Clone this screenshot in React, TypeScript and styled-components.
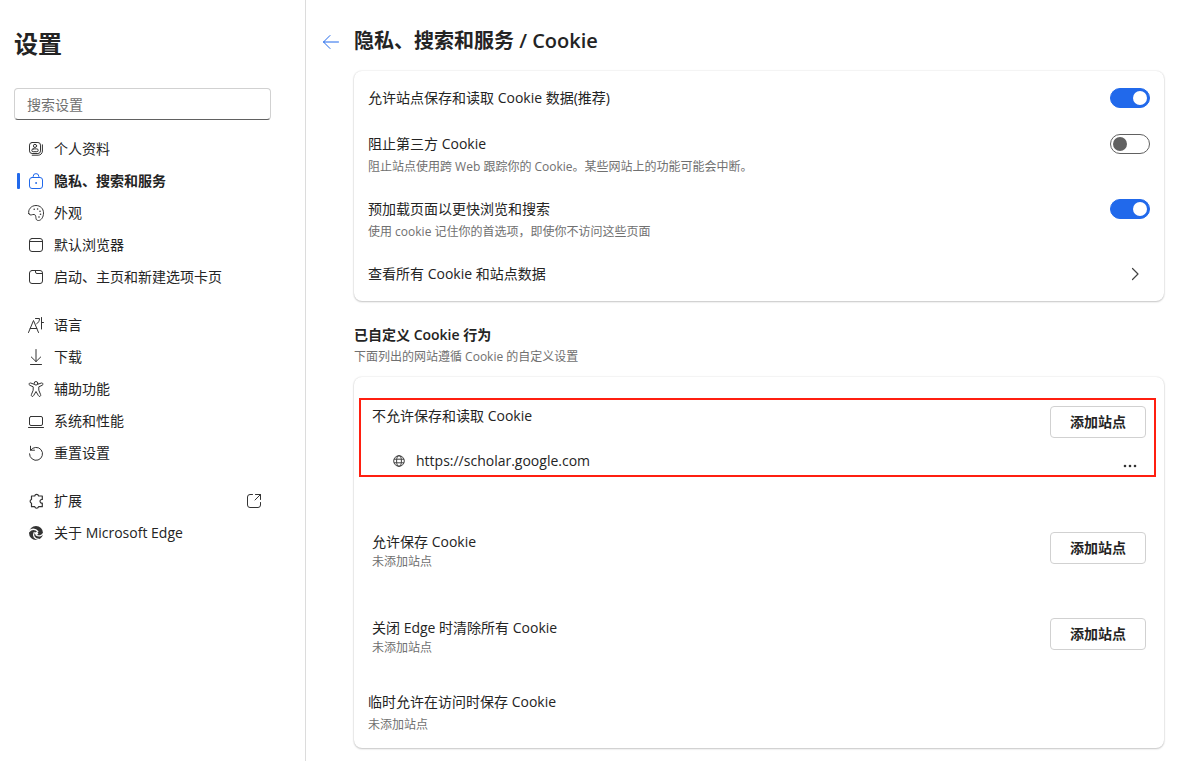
import React from "react";
import styled, { createGlobalStyle, css } from "styled-components";

const GlobalStyle = createGlobalStyle`
  *, *::before, *::after { box-sizing: border-box; }
  body {
    margin: 0;
    background: #fff;
    color: #242424;
    font: 14px/20px "Open Sans", "Noto Sans CJK SC", sans-serif;
  }
  h1, h2, h3, p, ul { margin: 0; padding: 0; }
  ul { list-style: none; }
  button, input { font: inherit; color: inherit; }
`;

const Page = styled.div`
  display: grid;
  grid-template-columns: 306px minmax(0, 1fr);
  min-height: 100vh;
`;

/* Sidebar */

const Sidebar = styled.aside`
  padding: 28px 34px 20px 14px;
  border-right: 1px solid #dcdcdc;
`;

const SidebarTitle = styled.h1`
  font-size: 24px;
  line-height: 32px;
  font-weight: 700;
`;

const SearchInput = styled.input`
  display: block;
  width: 100%;
  height: 32px;
  margin: 28px 0 13px;
  padding: 0 12px;
  border: 1px solid #d1d1d1;
  border-bottom-color: #616161;
  border-radius: 4px;
  background: #fff;
  outline: none;

  &::placeholder { color: #707070; opacity: 1; }
`;

const NavGroup = styled.ul`
  & + & { margin-top: 16px; }
`;

const NavLink = styled.a<{ $active?: boolean }>`
  display: flex;
  align-items: center;
  gap: 10px;
  height: 32px;
  padding: 0 9px 0 14px;
  color: inherit;
  text-decoration: none;

  svg { color: #333; }

  ${({ $active }) =>
    $active &&
    css`
      padding-left: 3px;
      gap: 8px;
      font-weight: 700;

      &::before {
        content: "";
        width: 3px;
        height: 16px;
        border-radius: 1px;
        background: #2169eb;
      }

      svg { color: #2169eb; }
      span { margin-left: 2px; }
    `}
`;

const NavText = styled.span`
  flex: 1;
`;

const Icon = styled.svg`
  display: block;
  flex: none;
  width: 16px;
  height: 16px;
  fill: none;
  stroke: currentColor;
  stroke-linecap: round;
  stroke-linejoin: round;
`;

/* Main column */

const Main = styled.main`
  display: flex;
  flex-direction: column;
  padding: 29px 17px 12px 48px;
`;

const Header = styled.header`
  display: flex;
  align-items: center;
  gap: 14px;
  margin-left: -32px;
`;

const BackButton = styled.button`
  display: grid;
  place-items: center;
  padding: 2px 0 0;
  border: 0;
  background: none;
  color: #2169eb;
  cursor: pointer;
`;

const PageTitle = styled.h2`
  font-size: 20px;
  line-height: 24px;
  font-weight: 600;
`;

const Card = styled.section`
  display: flex;
  flex-direction: column;
  border-radius: 8px;
  background: #fff;
  box-shadow: 0 1px 2px rgba(0, 0, 0, 0.2), 0 0 2px rgba(0, 0, 0, 0.14);
`;

const SettingsCard = styled(Card)`
  gap: 24px;
  margin-top: 18px;
  padding: 17px 14px;
`;

const SitesCard = styled(Card)`
  gap: 36px;
  padding: 21px 8px 15px 5px;
`;

const Row = styled.div`
  display: flex;
  justify-content: space-between;
  align-items: flex-start;
  min-height: 22px;
`;

const RowText = styled.div<{ $tight?: boolean }>`
  display: flex;
  flex-direction: column;
  gap: ${({ $tight }) => ($tight ? 1 : 4)}px;
`;

const Description = styled.p`
  color: #707070;
  font-size: 12px;
  line-height: 17px;
`;

const Switch = styled.input`
  appearance: none;
  display: flex;
  align-items: center;
  width: 40px;
  height: 20px;
  margin: 0;
  padding: 0 2px;
  border: 1px solid #616161;
  border-radius: 10px;
  background: #fff;
  cursor: pointer;

  &::before {
    content: "";
    width: 14px;
    height: 14px;
    border-radius: 50%;
    background: #616161;
  }

  &:checked {
    justify-content: flex-end;
    border-color: #2169eb;
    background: #2169eb;
  }

  &:checked::before { background: #fff; }
`;

const RowLink = styled.a`
  display: flex;
  align-items: center;
  justify-content: space-between;
  padding-right: 7px;
  color: inherit;
  text-decoration: none;

  svg { color: #424242; stroke-width: 1.2; }
`;

const SectionHeading = styled.div`
  display: flex;
  flex-direction: column;
  gap: 3px;
  margin: 24px 0 12px;
`;

const SectionTitle = styled.h3`
  font-size: 14px;
  line-height: 20px;
  font-weight: 600;
`;

const Groups = styled.div`
  display: flex;
  flex-direction: column;
  gap: 55px;
`;

const HighlightedGroup = styled.div`
  padding: 6px 8px 4px 11px;
  border: 2px solid #ff1f10;
`;

const GroupList = styled.div`
  display: flex;
  flex-direction: column;
  gap: 48px;
  padding: 0 10px 0 13px;
`;

const SiteGroup = styled.div`
  display: flex;
  justify-content: space-between;
  align-items: flex-start;
`;

const AddButton = styled.button`
  width: 96px;
  height: 32px;
  padding: 0;
  border: 1px solid #d1d1d1;
  border-radius: 4px;
  background: #fff;
  font-weight: 700;
  cursor: pointer;
`;

const Site = styled.div`
  display: flex;
  align-items: center;
  gap: 11px;
  margin-top: 13px;
  padding: 0 9px 0 21px;
`;

const SiteUrl = styled.span`
  flex: 1;
`;

const MoreButton = styled.button`
  display: grid;
  padding: 10px 0 0;
  border: 0;
  background: none;
  cursor: pointer;
`;

const TemporaryGroup = styled.div`
  padding: 0 9px;
`;

const icons: Record<string, React.ReactNode> = {
  profile: (
    <>
      <rect x="1.5" y="1.5" width="11" height="11" rx="2.6" />
      <circle cx="7" cy="4.9" r="1.6" />
      <rect x="3.8" y="7.9" width="6.4" height="2.8" rx="1.4" />
      <path d="M14.4 3.8v6.2a4.2 4.2 0 0 1-4.2 4.2H4.2" />
    </>
  ),
  lock: (
    <>
      <rect x="1.5" y="4.5" width="13" height="11" rx="2.5" />
      <path d="M5.2 4.3V3.4a2.8 2.8 0 0 1 5.6 0v.9" />
      <circle cx="8" cy="10" r="0.4" fill="currentColor" />
    </>
  ),
  palette: (
    <>
      <path d="M.8 8.6C-.3 4.8 3 .5 8 .5c4.4 0 7.5 3.2 7.5 7.4 0 4.3-2.3 7.6-5 7.6-3.6 0-2-3.700-3.200-5.300C6 8.300 3.500 10.500 2 9.900A1.900 1.900 0 0 1 .8 8.600z" />
      <g fill="currentColor" stroke="none">
        <circle cx="6.2" cy="4.2" r=".8" />
        <circle cx="9.6" cy="4" r=".8" />
        <circle cx="12" cy="6.2" r=".8" />
        <circle cx="12.5" cy="9.3" r=".8" />
        <circle cx="11" cy="12" r=".8" />
      </g>
    </>
  ),
  browser: (
    <>
      <rect x="1.5" y="1.5" width="13" height="13" rx="2.5" />
      <path d="M1.5 4.5h13" />
    </>
  ),
  tab: (
    <>
      <rect x="1.5" y="1.5" width="13" height="13" rx="2.5" />
      <path d="M7.5 1.7V3A1.5 1.5 0 0 0 9 4.5h5.300" />
    </>
  ),
  language: (
    <path d="M.5 15.5l5-12 5 12M2.200 11.500h6.600M7.500 1.500h4c0 2.500-1 4.200-2.800 5.200M13.500.5V12M13.500 5.500h2" />
  ),
  download: <path d="M8 .5v12M3.300 8L8 12.600 12.700 8M2.500 15.500h11" />,
  accessibility: (
    <>
      <circle cx="8" cy="2.300" r="1.800" />
      <path d="M6.200 3.300L2.700 2C1 1.600.4 3.700 1.800 4.300l3.400 1.500v3.400l-1.800 4.400c-.6 1.700 1.500 2.600 2.200 1L8 10.500l2.400 4.100c.7 1.600 2.800.7 2.200-1l-1.800-4.400V5.800l3.400-1.500c1.400-.6.8-2.700-.9-2.300L9.800 3.300" />
    </>
  ),
  laptop: (
    <>
      <rect x="1.500" y="3.500" width="13" height="9" rx="1.500" />
      <path d="M.5 14.500h15" />
    </>
  ),
  reset: <path d="M2.500 1.200v4h4M2.600 5.200A6.500 6.500 0 1 1 1.500 8.800" />,
  extension: (
    <path
      strokeWidth="1.200"
      d="M3.500 3h3.200a2 2 0 0 1 3.900 0h3.700v3.500a1.900 1.900 0 0 0-2.300 1.800 1.900 1.900 0 0 0 2.300 1.800v3.600h-3.700a2 2 0 0 1-3.900 0H3.500v-3.500a2 2 0 0 1 0-3.800z"
    />
  ),
  edge: (
    <>
      <circle cx="8" cy="8" r="7" fill="currentColor" stroke="none" />
      <g stroke="#fff" strokeWidth="1.300">
        <path d="M1 6.500C3.500 3.500 7.500 3.500 9.800 6.500" />
        <path d="M11 14.500C6.500 14 4.500 11 6.200 7.500" />
        <path d="M15.200 8.500c-1.500 2.600-4.600 3.200-7 1.500" />
      </g>
      <circle cx="8.500" cy="8.300" r="1.600" fill="#fff" stroke="none" />
    </>
  ),
  open: (
    <path d="M6.500 1.500H4A2.500 2.500 0 0 0 1.500 4v8A2.500 2.500 0 0 0 4 14.500h8a2.500 2.500 0 0 0 2.500-2.500V9.500M9.500 1.500h5v5M14.500 1.500L9 7" />
  ),
};

type NavEntry = {
  icon: string;
  label: string;
  active?: boolean;
  external?: boolean;
};

const navGroups: NavEntry[][] = [
  [
    { icon: "profile", label: "个人资料" },
    { icon: "lock", label: "隐私、搜索和服务", active: true },
    { icon: "palette", label: "外观" },
    { icon: "browser", label: "默认浏览器" },
    { icon: "tab", label: "启动、主页和新建选项卡页" },
  ],
  [
    { icon: "language", label: "语言" },
    { icon: "download", label: "下载" },
    { icon: "accessibility", label: "辅助功能" },
    { icon: "laptop", label: "系统和性能" },
    { icon: "reset", label: "重置设置" },
  ],
  [
    { icon: "extension", label: "扩展", external: true },
    { icon: "edge", label: "关于 Microsoft Edge" },
  ],
];

const switches = [
  { id: "allow", label: "允许站点保存和读取 Cookie 数据(推荐)", on: true },
  {
    id: "third-party",
    label: "阻止第三方 Cookie",
    description: "阻止站点使用跨 Web 跟踪你的 Cookie。某些网站上的功能可能会中断。",
    on: false,
  },
  {
    id: "preload",
    label: "预加载页面以更快浏览和搜索",
    description: "使用 cookie 记住你的首选项，即使你不访问这些页面",
    on: true,
  },
];

const emptyGroups = ["允许保存 Cookie", "关闭 Edge 时清除所有 Cookie"];

function Glyph({ name }: { name: string }) {
  return (
    <Icon viewBox="0 0 16 16" aria-hidden="true">
      {icons[name]}
    </Icon>
  );
}

export default function App() {
  return (
    <Page lang="zh-CN">
      <GlobalStyle />
      <Sidebar>
        <SidebarTitle>设置</SidebarTitle>
        <SearchInput type="search" placeholder="搜索设置" aria-label="搜索设置" />
        <nav>
          {navGroups.map((group, index) => (
            <NavGroup key={index}>
              {group.map(({ icon, label, active, external }) => (
                <li key={label}>
                  <NavLink href="#" $active={active} aria-current={active ? "page" : undefined}>
                    <Glyph name={icon} />
                    <NavText>{label}</NavText>
                    {external && <Glyph name="open" />}
                  </NavLink>
                </li>
              ))}
            </NavGroup>
          ))}
        </nav>
      </Sidebar>

      <Main>
        <Header>
          <BackButton type="button" aria-label="返回">
            <svg
              width="18"
              height="16"
              viewBox="0 0 18 16"
              fill="none"
              stroke="currentColor"
              strokeLinecap="round"
              strokeLinejoin="round"
            >
              <path d="M8 1.5L1.500 8 8 14.500M1.500 8h15" />
            </svg>
          </BackButton>
          <PageTitle>隐私、搜索和服务 / Cookie</PageTitle>
        </Header>

        <SettingsCard>
          {switches.map(({ id, label, description, on }) => (
            <Row key={id}>
              <RowText>
                <label htmlFor={id}>{label}</label>
                {description && <Description>{description}</Description>}
              </RowText>
              <Switch id={id} type="checkbox" role="switch" defaultChecked={on} />
            </Row>
          ))}
          <RowLink href="#">
            <span>查看所有 Cookie 和站点数据</span>
            <Icon viewBox="0 0 16 16" aria-hidden="true">
              <path d="M5.500 2.500L11 8l-5.500 5.500" />
            </Icon>
          </RowLink>
        </SettingsCard>

        <SectionHeading>
          <SectionTitle>已自定义 Cookie 行为</SectionTitle>
          <Description>下面列出的网站遵循 Cookie 的自定义设置</Description>
        </SectionHeading>

        <SitesCard>
          <Groups>
            <HighlightedGroup>
              <SiteGroup>
                <span>不允许保存和读取 Cookie</span>
                <AddButton type="button">添加站点</AddButton>
              </SiteGroup>
              <Site>
                <svg width="12" height="12" viewBox="0 0 12 12" fill="none" stroke="#424242" aria-hidden="true">
                  <circle cx="6" cy="6" r="5.300" />
                  <ellipse cx="6" cy="6" rx="2.400" ry="5.300" />
                  <path d="M1 4.200h10M1 7.800h10" />
                </svg>
                <SiteUrl>https://scholar.google.com</SiteUrl>
                <MoreButton type="button" aria-label="更多操作">
                  <svg width="14" height="4" viewBox="0 0 14 4" fill="#333">
                    <circle cx="2" cy="2" r="1.300" />
                    <circle cx="7" cy="2" r="1.300" />
                    <circle cx="12" cy="2" r="1.300" />
                  </svg>
                </MoreButton>
              </Site>
            </HighlightedGroup>
            <GroupList>
              {emptyGroups.map((label) => (
                <SiteGroup key={label}>
                  <RowText $tight>
                    <span>{label}</span>
                    <Description>未添加站点</Description>
                  </RowText>
                  <AddButton type="button">添加站点</AddButton>
                </SiteGroup>
              ))}
            </GroupList>
          </Groups>
          <TemporaryGroup>
            <RowText>
              <span>临时允许在访问时保存 Cookie</span>
              <Description>未添加站点</Description>
            </RowText>
          </TemporaryGroup>
        </SitesCard>
      </Main>
    </Page>
  );
}
